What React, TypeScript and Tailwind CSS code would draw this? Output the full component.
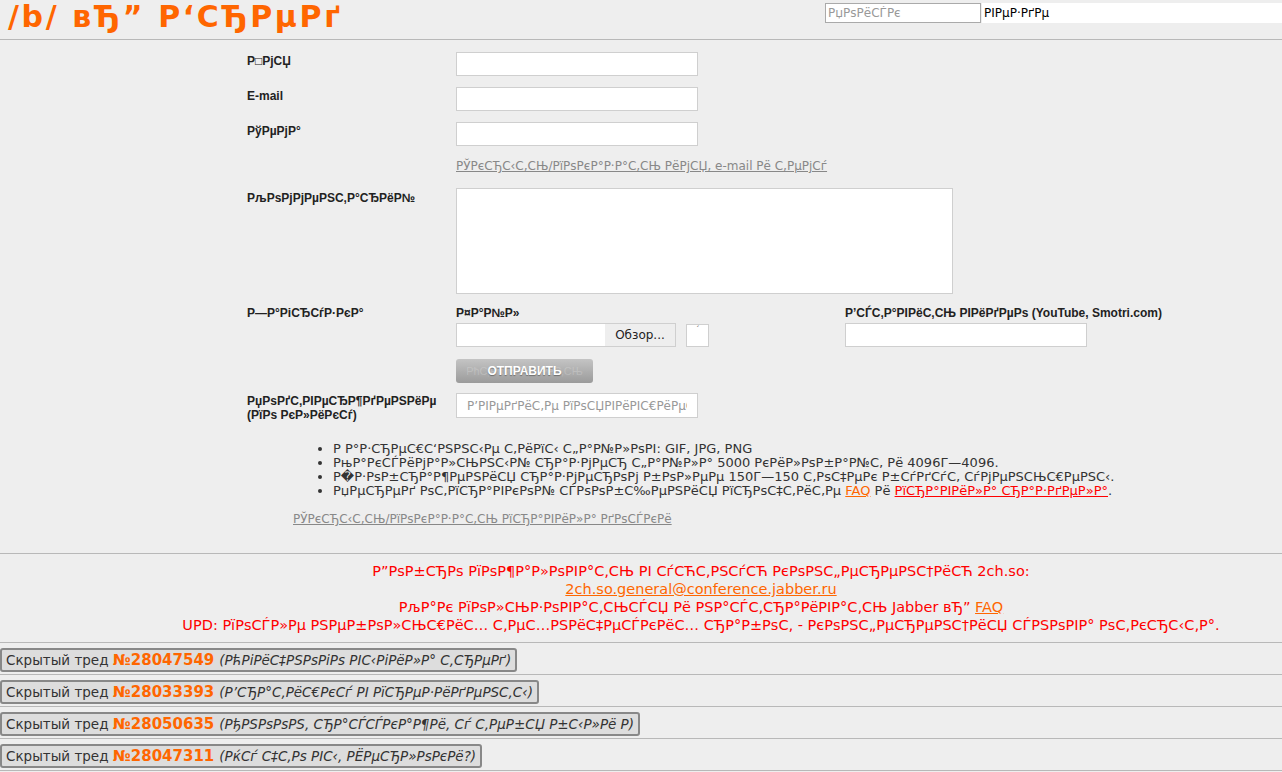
import { useState } from "react";

const hidden = [
  { num: "28047549", title: "РћРіРёС‡РЅРѕРіРѕ РІС‹РіРёР»Р° С‚СЂРµРґ" },
  { num: "28033393", title: "Р’СЂР°С‚РёС€РєСѓ РІ РїСЂРµР·РёРґРµРЅС‚С‹" },
  { num: "28050635", title: "РђРЅРѕРѕРЅ, СЂР°СЃСЃРєР°Р¶Рё, Сѓ С‚РµР±СЏ Р±С‹Р»Рё Р" },
  { num: "28047311", title: "РќСѓ С‡С‚Рѕ РІС‹, РЁРµСЂР»РѕРєРё?" },
];

const label = "font-['Liberation_Sans',sans-serif] text-[12px] font-bold text-[#222] leading-[14px]";
const field = "bg-white border border-[#cfcfcf] outline-none";

const App = () => {
  const [search, setSearch] = useState("");

  return (
    <div className="min-h-[772px] bg-[#eeeeee] font-['DejaVu_Sans',sans-serif] text-[#333]">
      <header className="flex h-[40px] items-start justify-between border-b border-[#b8b8b8]">
        <h1 className="pl-[8px] pt-[1px] text-[30px] font-bold leading-[32px] tracking-[2.6px] text-[#ff6600]">
          /b/ вЂ” Р‘СЂРµРґ
        </h1>
        <div className="flex pt-[3px]">
          <input
            value={search}
            onChange={(e) => setSearch(e.target.value)}
            placeholder="РџРѕРёСЃРє"
            className="h-[20px] w-[156px] border border-[#aaa] bg-white px-[2px] text-[12px] text-[#333] outline-none placeholder:text-[#999]"
          />
          <div className="ml-[1px] flex h-[20px] w-[300px] items-center bg-white px-[2px] text-[12px] text-black">
            РІРµР·РґРµ
          </div>
        </div>
      </header>

      <div className="ml-[247px] pt-[12px]">
        <div className="grid grid-cols-[209px_auto] gap-y-[11px]">
          <div className={`${label} pt-[2px]`}>Р□РјСЏ</div>
          <input className={`${field} h-[24px] w-[242px]`} />
          <div className={`${label} pt-[2px]`}>E-mail</div>
          <input className={`${field} h-[24px] w-[242px]`} />
          <div className={`${label} pt-[2px]`}>РўРµРјР°</div>
          <input className={`${field} h-[24px] w-[242px]`} />
        </div>

        <div className="ml-[209px] mt-[7px]">
          <a href="#" className="text-[12px] text-[#888] underline">
            РЎРєСЂС‹С‚СЊ/РїРѕРєР°Р·Р°С‚СЊ РёРјСЏ, e-mail Рё С‚РµРјСѓ
          </a>
        </div>

        <div className="mt-[11px] grid grid-cols-[209px_auto]">
          <div className={`${label} pt-[3px]`}>РљРѕРјРјРµРЅС‚Р°СЂРёР№</div>
          <textarea className={`${field} h-[106px] w-[497px] resize-none`} />
        </div>

        <div className="mt-[9px] grid grid-cols-[209px_auto]">
          <div className={`${label} pt-[3px]`}>Р—Р°РіСЂСѓР·РєР°</div>
          <div className="flex">
            <div className="w-[389px]">
              <div className={`${label} pt-[3px]`}>Р¤Р°Р№Р»</div>
              <div className="mt-[3px] flex items-center">
                <div className="flex h-[24px] w-[220px] border border-[#cfcfcf] bg-white">
                  <div className="flex-1" />
                  <div className="flex w-[70px] items-center justify-center bg-[#eeeeee] text-[12px] text-[#222]">
                    Обзор...
                  </div>
                </div>
                <div className="ml-[10px] flex h-[23px] w-[23px] justify-center border border-[#cfcfcf] bg-white pt-[1px] text-[9px] leading-[8px] text-[#666]">
                  ˊ
                </div>
              </div>
              <button className="relative mt-[12px] h-[24px] w-[137px] rounded-[3px] bg-gradient-to-b from-[#c4c4c4] to-[#9b9b9b] font-['Liberation_Sans',sans-serif] text-[12px] font-bold text-white">
                <span className="absolute inset-0 flex items-center justify-center text-[11px] font-normal text-white/20">
                  РћС‚РїСЂР°РІРёС‚СЊ
                </span>
                <span className="relative [text-shadow:0_1px_1px_rgba(0,0,0,0.35)]">ОТПРАВИТЬ</span>
              </button>
            </div>
            <div>
              <div className={`${label} pt-[3px]`}>
                Р’СЃС‚Р°РІРёС‚СЊ РІРёРґРµРѕ (YouTube, Smotri.com)
              </div>
              <input className={`${field} mt-[3px] h-[24px] w-[242px]`} />
            </div>
          </div>
        </div>

        <div className="mt-[10px] grid grid-cols-[209px_auto]">
          <div className={`${label} pt-[1px]`}>
            РџРѕРґС‚РІРµСЂР¶РґРµРЅРёРµ
            <br />
            (РїРѕ РєР»РёРєСѓ)
          </div>
          <input
            placeholder="Р’РІРµРґРёС‚Рµ РїРѕСЏРІРёРІС€РёРµСЃСЏ"
            className={`${field} h-[25px] w-[242px] px-[10px] text-[12px] placeholder:text-[#999]`}
          />
        </div>
      </div>

      <ul className="ml-[333px] mt-[20px] list-disc text-[13px] leading-[14px] text-[#333]">
        <li>Р Р°Р·СЂРµС€С‘РЅРЅС‹Рµ С‚РёРїС‹ С„Р°Р№Р»РѕРІ: GIF, JPG, PNG</li>
        <li>РњР°РєСЃРёРјР°Р»СЊРЅС‹Р№ СЂР°Р·РјРµСЂ С„Р°Р№Р»Р° 5000 РєРёР»РѕР±Р°Р№С‚ Рё 4096Г—4096.</li>
        <li>Р�Р·РѕР±СЂР°Р¶РµРЅРёСЏ СЂР°Р·РјРµСЂРѕРј Р±РѕР»РµРµ 150Г—150 С‚РѕС‡РµРє Р±СѓРґСѓС‚ СѓРјРµРЅСЊС€РµРЅС‹.</li>
        <li>
          РџРµСЂРµРґ РѕС‚РїСЂР°РІРєРѕР№ СЃРѕРѕР±С‰РµРЅРёСЏ РїСЂРѕС‡С‚РёС‚Рµ{" "}
          <a href="#" className="text-[#ff6600] underline">FAQ</a> Рё{" "}
          <a href="#" className="text-[#ff0000] underline">РїСЂР°РІРёР»Р° СЂР°Р·РґРµР»Р°</a>.
        </li>
      </ul>

      <div className="ml-[293px] mt-[8px]">
        <a href="#" className="text-[12px] text-[#888] underline">
          РЎРєСЂС‹С‚СЊ/РїРѕРєР°Р·Р°С‚СЊ РїСЂР°РІРёР»Р° РґРѕСЃРєРё
        </a>
      </div>

      <div className="mt-[23px] border-t border-[#b8b8b8] py-[8px] pl-[120px] text-center text-[14.5px] leading-[18px] text-[#ff0000]">
        <div>Р”РѕР±СЂРѕ РїРѕР¶Р°Р»РѕРІР°С‚СЊ РІ СѓСЋС‚РЅСѓСЋ РєРѕРЅС„РµСЂРµРЅС†РёСЋ 2ch.so:</div>
        <div>
          <a href="#" className="text-[#ff6600] underline">2ch.so.general@conference.jabber.ru</a>
        </div>
        <div>
          РљР°Рє РїРѕР»СЊР·РѕРІР°С‚СЊСЃСЏ Рё РЅР°СЃС‚СЂР°РёРІР°С‚СЊ Jabber вЂ”{" "}
          <a href="#" className="text-[#ff6600] underline">FAQ</a>
        </div>
        <div className="whitespace-nowrap">
          UPD: РїРѕСЃР»Рµ РЅРµР±РѕР»СЊС€РёС… С‚РµС…РЅРёС‡РµСЃРєРёС… СЂР°Р±РѕС‚ - РєРѕРЅС„РµСЂРµРЅС†РёСЏ СЃРЅРѕРІР° РѕС‚РєСЂС‹С‚Р°.
        </div>
      </div>

      {hidden.map((t) => (
        <div key={t.num} className="h-[32px] border-t border-[#b8b8b8] pt-[5px]">
          <div className="inline-flex h-[24px] items-center rounded-[3px] border-2 border-[#888] bg-[#dddddd] px-[4px] text-[13.5px] text-[#333]">
            Скрытый тред&nbsp;
            <span className="text-[15px] font-bold text-[#ff6600]">№{t.num}</span>
            <span className="ml-[5px] text-[13.5px] italic">({t.title})</span>
          </div>
        </div>
      ))}
      <div className="border-t border-[#b8b8b8]" />
    </div>
  );
};

export default App;
